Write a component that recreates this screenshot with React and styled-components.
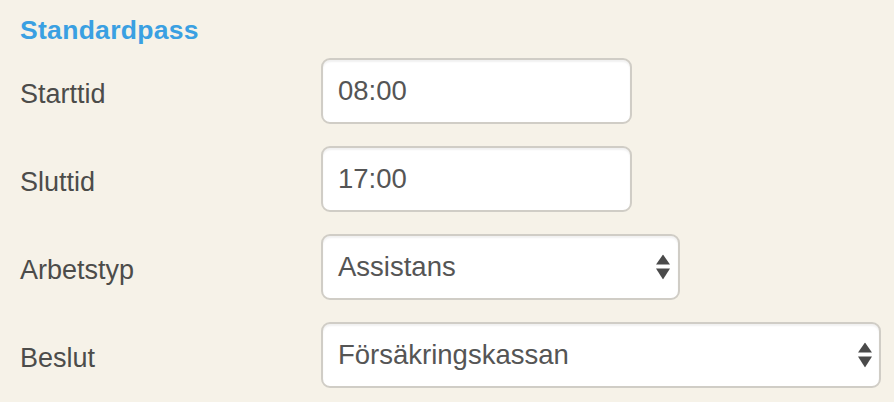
import React from 'react'
import styled, { createGlobalStyle } from 'styled-components'

const Global = createGlobalStyle`
  html, body {
    margin: 0;
    padding: 0;
    background: #f6f2e8;
    font-family: "Liberation Sans", Arial, sans-serif;
  }
`

const Form = styled.div`
  padding: 14px 10px 0 20px;
  display: flex;
  flex-direction: column;
`

const Heading = styled.h4`
  margin: 0 0 12px 0;
  font-size: 26.5px;
  line-height: 32px;
  font-weight: bold;
  color: #3aa0e2;
  letter-spacing: 0.3px;
`

const Row = styled.div`
  display: flex;
  align-items: center;
  margin-bottom: 22px;
`

const Label = styled.label`
  width: 301px;
  flex-shrink: 0;
  font-size: 27px;
  color: #4c4c4a;
  padding-top: 7px;
`

const Field = styled.div`
  position: relative;
  box-sizing: border-box;
  flex-shrink: 0;
  width: ${p => p.$w}px;
  height: 66px;
  background: #fff;
  border: 2px solid #d0cdc6;
  border-radius: 9px;
  box-shadow: inset 0 2px 2px rgba(0, 0, 0, 0.06);
  display: flex;
  align-items: center;
  padding: 0 15px;
  font-size: 27.5px;
  color: #555;
`

const Arrows = styled.svg`
  position: absolute;
  right: ${p => p.$r}px;
  top: 50%;
  transform: translateY(-50%);
`

function Select({ w, r, children }) {
  return (
    <Field $w={w}>
      {children}
      <Arrows $r={r} width="14" height="25" viewBox="0 0 14 25">
        <polygon points="7,0 14,10 0,10" fill="#4a4a4a" />
        <polygon points="0,14 14,14 7,25" fill="#4a4a4a" />
      </Arrows>
    </Field>
  )
}

export default function App() {
  return (
    <>
      <Global />
      <Form>
        <Heading>Standardpass</Heading>
        <Row>
          <Label>Starttid</Label>
          <Field $w={311}>08:00</Field>
        </Row>
        <Row>
          <Label>Sluttid</Label>
          <Field $w={311}>17:00</Field>
        </Row>
        <Row>
          <Label>Arbetstyp</Label>
          <Select w={359} r={8}>Assistans</Select>
        </Row>
        <Row>
          <Label>Beslut</Label>
          <Select w={560} r={7}>Försäkringskassan</Select>
        </Row>
      </Form>
    </>
  )
}
